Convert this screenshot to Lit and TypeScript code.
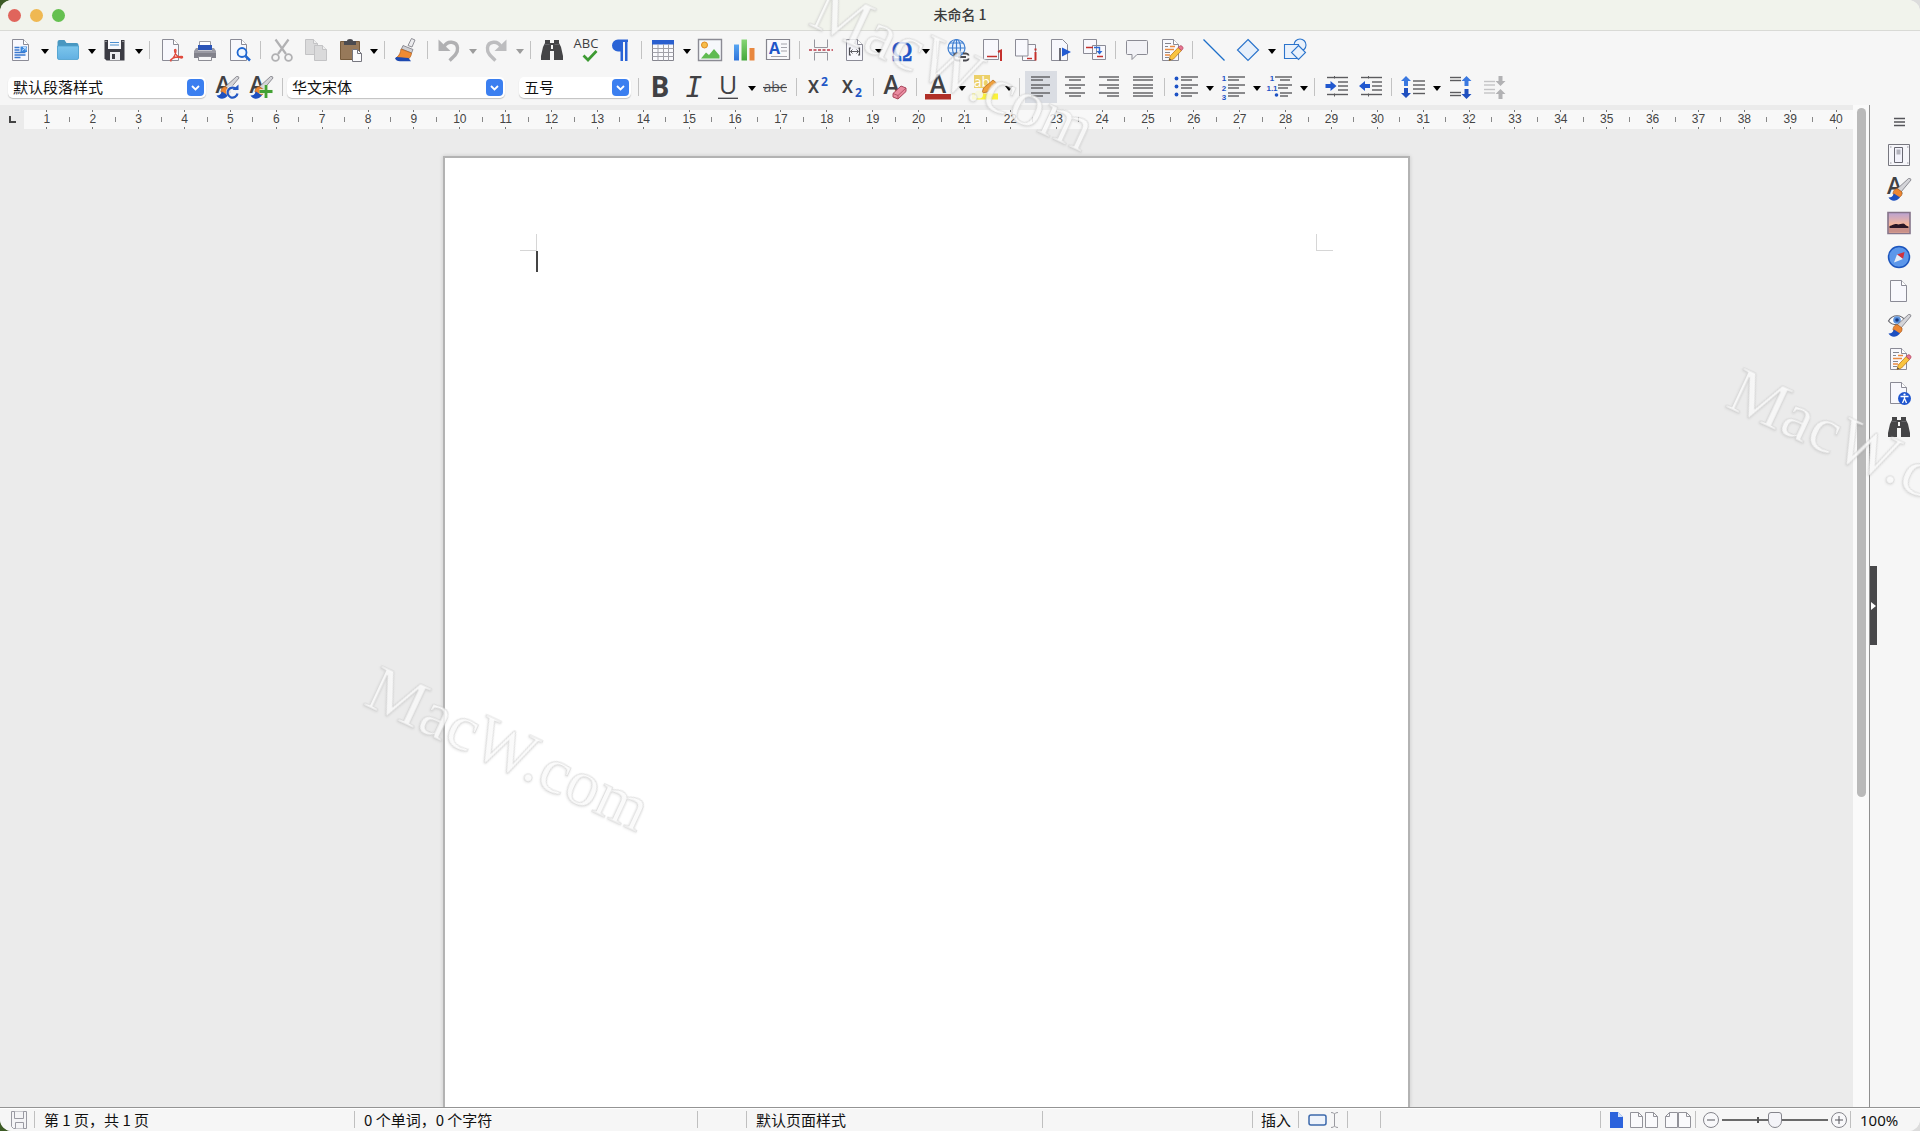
import { LitElement, html, svg, css, nothing, SVGTemplateResult, TemplateResult } from "lit";
import { customElement, state } from "lit/decorators.js";
import { classMap } from "lit/directives/class-map.js";

const page = svg`<path d="M3.5 1.5h11l5 5v16h-16z" fill="#f8f8fd" stroke="#8b8b96"/><path d="M14.5 1.5v5h5" fill="#fff" stroke="#8b8b96"/>`;

const brushTip = svg`
  <path d="M21.500 1.500q2.500-.5 2.500 1.500l-10 12-4-3z" fill="#d4d4d8" stroke="#77777f" stroke-width=".8"/>
  <path d="M6 17c0-4 3-6 5-5l4 3c.5 3-1 5-4 5.500z" fill="#ed8733" stroke="#a55a1e" stroke-width=".7"/>
  <path d="M1.500 20.500c3 0 4-1 5.500-4l6 4c-1.500 2-4.500 3.300-6 3.300-2.500 0-4.500-1.500-5.500-3.300z" fill="#1e50c0"/>`;

const pencil = svg`
  <path d="M10 22.500l1.200-4.500 8-8.500 3.300 3-8 8.500z" fill="#f9c440" stroke="#c07a18" stroke-width=".8"/>
  <path d="M19.200 9.500l1.600-1.600c1.500-.8 4 1.200 3 3l-1.400 1.600z" fill="#e87592" stroke="#a93d55" stroke-width=".7"/>
  <path d="M10 22.500l.6-2.200 1.600 1.400z" fill="#444"/>`;

const binoculars = svg`<path d="M5 2h5v3h4V2h5v3l2 4 2 9v4h-9v-9h-4v9H1v-4l2-9 2-4z" fill="#454547"/><path d="M11 7h2v4h-2z" fill="#f5f5f5"/><path d="M4.500 6.500h5M14.500 6.500h5" stroke="#6c6c70" stroke-width=".8"/>`;

const arrowUp = (x: number, y: number, fill: string) => svg`<path d="M${x} ${y}l5 5h-3v5h-4v-5h-3z" fill=${fill}/>`;
const arrowDown = (x: number, y: number, fill: string) => svg`<path d="M${x} ${y}l5-5h-3v-5h-4v5h-3z" fill=${fill}/>`;

const hLines = (rows: [number, number, number][], colour = "#5c5c5f") =>
  rows.map(([x1, x2, y]) => svg`<path d="M${x1} ${y}H${x2}" stroke=${colour} stroke-width="1.400"/>`);

const icons: Record<string, SVGTemplateResult> = {
  newDoc: svg`${page}<path d="M5.500 9.500h5M5.500 12h5M5.500 14.500h11M5.500 17h11M5.500 19.500h6" stroke="#3a78cf" stroke-width="1.300"/><path d="M11.500 8.500h6.500v5.500h-6.500z" fill="#3a86dc"/><path d="M13 12.500l4-3M14 9.500h3v3" stroke="#bfe0ff" fill="none"/>`,
  folder: svg`<path d="M1.500 20V4q0-2 2-2h5l2 3h10q2 0 2 2v13z" fill="#4897c0"/><path d="M1.500 8h21v12q0 1.500-1.500 1.500H3q-1.500 0-1.500-1.500z" fill="url(#g-folder)" stroke="#4b9fce" stroke-width=".8"/>`,
  save: svg`<path d="M1.500 2h20v20.500h-18l-2-2z" fill="#3b3b43"/><path d="M5 2h13v9H5z" fill="#f8f8fb"/><path d="M7 4.500h9M7 7h9" stroke="#4c8fd0" stroke-width="1.100"/><path d="M7 14h10v8H7z" fill="#ececf0"/><path d="M9 16h3v5H9z" fill="#3b3b43"/><path d="M2.500 3.500h1M19.500 3.500h1" stroke="#ddd"/>`,
  pdf: svg`${page}<path d="M11 22.500c4-2 6-7 6-10 0-1.500-1.500-1.500-1.500 0 0 3.500 4 7.500 7 7.500 1.500 0 1.500-1.500 0-1.500-3 0-8 1-10.500 3-1 1-.5 2 .5 1" fill="none" stroke="#e04a3d" stroke-width="1.300"/>`,
  print: svg`<path d="M6.500 3.500h11v8h-11z" fill="#fff" stroke="#9a9aa2"/><path d="M5 7h14v5H5z" fill="#2c55b8"/><path d="M3 10h2v2.500h14V10h2l2 3v6H1v-6z" fill="#9a9aa3"/><path d="M1 15h22v5H1z" fill="#82828b"/><path d="M5.500 18.500h13v4h-13z" fill="#f6f6f6" stroke="#8d8d95"/>`,
  preview: svg`${page}<circle cx="15" cy="14.500" r="4.500" fill="#eef6ff" fill-opacity=".9" stroke="#1f67d2" stroke-width="1.800"/><path d="M18.500 18l4.500 4.500" stroke="#1f67d2" stroke-width="2.500"/>`,
  cut: svg`<g fill="none" stroke="#b1b1b3"><path d="M5.500 1.500L16 16M18.500 1.500L8 16" stroke-width="2.200"/><circle cx="5.500" cy="19.500" r="3.400" stroke-width="1.800"/><circle cx="18.500" cy="19.500" r="3.400" stroke-width="1.800"/></g>`,
  copy: svg`<g fill="#dadadb" stroke="#c3c3c5"><path d="M1.500 1.500h8l4 4v11h-12z"/><path d="M10.500 7.500h8l4 4v11h-12z"/><path d="M9.500 1.500v4h4M18.500 7.500v4h4" fill="#eee"/></g>`,
  paste: svg`<path d="M2.500 3.500h19v18h-19z" fill="#97795a" stroke="#775b3c"/><path d="M6 3h3q0-2 3-2t3 2h3v4H6z" fill="#4b4b50"/><path d="M14.500 11.500h5l4 4v8h-9z" fill="#fbfbfd" stroke="#77777f"/><path d="M19.500 11.500v4h4" fill="none" stroke="#77777f"/>`,
  brush: svg`<path d="M17.500 0.500l3.500 1.500-3 7-4-1.500z" fill="#ececee" stroke="#85858c" stroke-width=".9"/><path d="M9 7.500l10 4-1.500 3.500-10-4z" fill="#d0d0d4" stroke="#85858c" stroke-width=".9"/><path d="M7 11l10.500 4c0 2-1 4-3 6l-12-1.500c3-2 4-5 4.500-8.500z" fill="#f08b32" stroke="#ad5d1d" stroke-width=".7"/><path d="M2.500 19L14.500 20l2.500 3.300H6q-4 0-5-3z" fill="#1d49b0"/>`,
  undo: svg`<path d="M7 9c3-7 13-6 13.500 1 .5 5-3 8-8 12.500" fill="none" stroke="#b0b0b2" stroke-width="3.400"/><path d="M1.500 1.500v11.500h12z" fill="#b0b0b2"/>`,
  redo: svg`<path d="M17 9c-3-7-13-6-13.500 1-.5 5 3 8 8 12.500" fill="none" stroke="#bdbdbf" stroke-width="3.400"/><path d="M22.500 1.500v11.500h-12z" fill="#bdbdbf"/>`,
  find: binoculars,
  spelling: svg`<text x="12" y="9.500" text-anchor="middle" class="abc" fill="#3f3f42">ABC</text><path d="M9.500 17.500l4.500 4.500 8.500-9" fill="none" stroke="#3d9a32" stroke-width="2.700"/>`,
  pilcrow: svg`<path d="M20 1.500H10a6 6 0 0 0 0 12h2.500V23H15V4h2v19h2.500V4H20z" fill="#2a63d6"/>`,
  table: svg`<path d="M1.500 2.500h21v20h-21z" fill="#fafafd" stroke="#85858e"/><path d="M1 2h22v4.500H1z" fill="#2a5fcf"/><path d="M1.500 10.500h21M1.500 14.500h21M1.500 18.500h21M7 6v16.500M12.500 6v16.500M17.500 6v16.500" stroke="#a2a2aa"/>`,
  image: svg`<path d="M.5 1.500h23v21H.5z" fill="#f6f8fb" stroke="#8b8b94" stroke-width="1.400"/><circle cx="6.500" cy="7" r="3" fill="#f7bd4a" stroke="#de8b22"/><path d="M3 20.500l5-6 3 2.500 5-6 5.500 6.500v3z" fill="#5fbb52"/>`,
  chart: svg`<path d="M2 6.500h5v16H2z" fill="url(#g-blue)"/><path d="M9.500 1.500H15v21H9.500z" fill="url(#g-green)"/><path d="M17.500 10h5v12.500h-5z" fill="#e8873f"/>`,
  textbox: svg`<path d="M.5 1.500h23v20H.5z" fill="#f9f9fc" stroke="#85858e" stroke-width="1.200"/><text x="8.500" y="16" text-anchor="middle" class="boxA" fill="#1f56c8">A</text><path d="M15 6h6M15 9.500h6M15 13h6M5 18.500h16" stroke="#a4a4ac"/>`,
  pageBreak: svg`<path d="M5.500 1.500v8h13v-8M5.500 22.500v-8h13v8" fill="none" stroke="#96969e"/><path d="M0 12h24" stroke="#bb3a48" stroke-width="1.500" stroke-dasharray="3 1.500"/>`,
  field: svg`${page}<path d="M8 10H6.500v7H8M15 10h1.500v7H15" fill="none" stroke="#4b4b50" stroke-width="1.200"/><path d="M7.500 13.500h8M9.500 11.500l-2 2 2 2M13.500 11.500l2 2-2 2" fill="none" stroke="#5f5f66"/>`,
  omega: svg`<text x="12" y="22.500" text-anchor="middle" class="omega" fill="#1f56c8" stroke="#1f56c8" stroke-width=".5">Ω</text>`,
  link: svg`<g fill="#e9f2fd" stroke="#3f7ed0" stroke-width="1.200"><circle cx="10.500" cy="10" r="8.500"/><path d="M10.500 1.500v17M2 10h17M4 5h13M4 15h13" fill="none"/><ellipse cx="10.500" cy="10" rx="4" ry="8.500" fill="none"/></g><path d="M14 15.500h-3q-3 0-3 3.500t3 3.500h3M17 15.500h3q2 0 2.800 2M22.800 20.500q-.8 2-2.800 2h-3M12 19h8" fill="none" stroke="#4a4a50" stroke-width="1.800"/>`,
  footnote: svg`<path d="M3.500 1.500h15v20h-15z" fill="#f8f8fd" stroke="#8b8b96"/><path d="M7 18.500h10" stroke="#c5302d" stroke-width="1.500"/><path d="M18 14l3-1.500V23" fill="none" stroke="#c5302d" stroke-width="2"/>`,
  endnote: svg`<path d="M8.500 6.500h13v16h-13z" fill="#f8f8fd" stroke="#8b8b96"/><path d="M1.500 1.500h12.500v16.500H1.500z" fill="#f8f8fd" stroke="#8b8b96"/><path d="M13 20.500h5" stroke="#c5302d" stroke-width="1.400"/><path d="M21.500 14v8.500M21.500 10.500v2" stroke="#c5302d" stroke-width="2"/>`,
  bookmark: svg`<path d="M3.500 1.500h11l5 5v16h-16z" fill="#f8f8fd" stroke="#8b8b96"/><path d="M12 10v13" stroke="#6e6e78" stroke-width="2"/><path d="M14 9.500l9 4.500-9 4.500z" fill="#235bd2"/>`,
  crossRef: svg`<path d="M1.500 1.500h13v14h-13zM10.500 7.500h13v14h-13z" fill="#f8f8fd" stroke="#8b8b96"/><path d="M4 9.500h7M15 18.500h6" stroke="#c5302d" stroke-width="1.400"/><path d="M12 9.500h5.500v4" fill="none" stroke="#2b6ad6" stroke-width="1.400"/><path d="M14.500 13h6l-3 3.500z" fill="#2b6ad6"/>`,
  comment: svg`<path d="M2.500 2.500h19q1 0 1 1v12q0 1-1 1H12l-5 5v-5H2.500q-1 0-1-1v-12q0-1 1-1z" fill="#f2f2f6" stroke="#8b8b94"/>`,
  track: svg`${page}<path d="M6 5.500h6M6 8.500h3M6 14.500h5M6 19.500h4" stroke="#85858e"/><path d="M11 8.500h5M6 11.500h9M6 17h5" stroke="#ea8a41" stroke-width="1.300"/>${pencil}`,
  line: svg`<path d="M1.500 1.500l21 21" stroke="#1c6fc9" stroke-width="1.300"/>`,
  diamond: svg`<path d="M12 1.500L22.500 12 12 22.500 1.500 12z" fill="#e6effa" stroke="#2b74cc" stroke-width="1.200"/>`,
  shapes: svg`<g fill="#e9f1fb" stroke="#2b74cc" stroke-width="1.100"><circle cx="17" cy="7" r="6"/><path d="M1.500 6.500h14v14h-14z"/><path d="M15.500 7.500l7 7-7 7-7-7z"/></g>`,
  updateStyle: svg`<text x="8" y="18" text-anchor="middle" class="styleA" fill="#3f4144">A</text>${brushTip}<circle cx="17.500" cy="17" r="6.500" fill="#f5f5f5" fill-opacity=".8"/><path d="M21.500 14.500a5 5 0 1 0 1 4" fill="none" stroke="#2459c4" stroke-width="2.200"/><path d="M17.500 15h6V9.500z" fill="#2459c4"/>`,
  addStyle: svg`<text x="8" y="18" text-anchor="middle" class="styleA" fill="#3f4144">A</text>${brushTip}<path d="M17 10v13M10.500 16.500h13" stroke="#eef6ea" stroke-width="4.500"/><path d="M17 10v13M10.500 16.500h13" stroke="#43a134" stroke-width="2.800"/>`,
  bold: svg`<text x="12" y="22" text-anchor="middle" class="glyph" fill="#414144">B</text>`,
  italic: svg`<text x="12" y="22" text-anchor="middle" class="slanted" fill="#414144">I</text>`,
  underline: svg`<text x="12" y="18.500" text-anchor="middle" class="glyphU" fill="#414144">U</text><path d="M2 23.300h20" stroke="#414144" stroke-width="1.300"/>`,
  strike: svg`<text x="12" y="16.500" text-anchor="middle" class="struck" fill="#55555a">abc</text><path d="M0 12.500h24" stroke="#414144" stroke-width="1.200"/>`,
  superscript: svg`<text x="7.500" y="18" text-anchor="middle" class="scriptX" fill="#414144">X</text><text x="18.500" y="10.500" text-anchor="middle" class="script" fill="#2257c6">2</text>`,
  subscript: svg`<text x="7.500" y="18" text-anchor="middle" class="scriptX" fill="#414144">X</text><text x="18.500" y="22" text-anchor="middle" class="script" fill="#2257c6">2</text>`,
  clear: svg`<text x="8.500" y="18.500" text-anchor="middle" class="plainA" fill="#414144">A</text><path d="M10 18.500l8-7.500 5 2v3.500l-8 7.500-5-2z" fill="#e98ba0" stroke="#a9465c"/><path d="M10 18.500l5 2 8-7.500M15 20.500V24" fill="none" stroke="#a9465c" stroke-width=".8"/>`,
  fontColour: svg`<text x="12" y="18" text-anchor="middle" class="plainA" fill="#414144">A</text><path d="M-1 19h26v5.500H-1z" fill="#b02f26"/>`,
  highlight: svg`<path d="M1 0h16v13H1z" fill="#ecd069"/><text x="9" y="11.500" text-anchor="middle" class="struck" fill="#fff">ab</text><path d="M-1 18.500h26v6H-1z" fill="#fbf23b"/><path d="M9 18l1.500-5L20 5l3.500 3-9 9z" fill="#f0a03c" stroke="#b86c1a" stroke-width=".8"/><circle cx="6" cy="19.500" r="4" fill="#f7f7dd"/>`,
  left: svg`${hLines([[2, 21, 2], [2, 14, 5], [2, 21, 10], [2, 14, 13], [2, 21, 18], [2, 14, 21]])}`,
  centre: svg`${hLines([[2, 22, 2], [6, 18, 5], [2, 22, 10], [6, 18, 13], [2, 22, 18], [6, 18, 21]])}`,
  right: svg`${hLines([[2, 22, 2], [10, 22, 5], [2, 22, 10], [10, 22, 13], [2, 22, 18], [10, 22, 21]])}`,
  justify: svg`${hLines([[2, 22, 2], [2, 22, 5], [2, 22, 10], [2, 22, 13], [2, 22, 18], [2, 22, 21]])}`,
  bullets: svg`${hLines([[7, 24, 2], [7, 18, 5], [7, 24, 10], [7, 18, 13], [7, 24, 18], [7, 18, 21]])}<g fill="#1d52c5"><circle cx="2.500" cy="3.500" r="1.900"/><circle cx="2.500" cy="11.500" r="1.900"/><circle cx="2.500" cy="19.500" r="1.900"/></g>`,
  numbers: svg`${hLines([[7, 24, 2], [7, 18, 5], [7, 24, 10], [7, 18, 13], [7, 24, 18], [7, 18, 21]])}<g fill="#1d52c5" class="num" text-anchor="middle"><text x="3" y="6">1</text><text x="3" y="15.500">2</text><text x="3" y="25">3</text></g>`,
  outline: svg`${hLines([[7, 24, 2], [12, 22, 5], [10, 24, 10], [10, 20, 13], [12, 24, 18], [12, 20, 21]])}<g fill="#1d52c5" class="num" text-anchor="middle"><text x="4" y="6">1</text><text x="4" y="15.500">1.1</text></g><circle cx="8.500" cy="20" r="1.800" fill="#1d52c5"/>`,
  indent: svg`${hLines([[3, 24, 2.5], [14, 24, 7], [14, 24, 11], [14, 24, 15], [3, 24, 19.5]])}<path d="M12.500 11l-6-5v3H1.500v4h5v3z" fill="#2158cf"/><path d="M10.500 1v2.500M10.500 18.500v3" stroke="#5c5c5f"/>`,
  outdent: svg`${hLines([[3, 24, 2.5], [14, 24, 7], [14, 24, 11], [14, 24, 15], [3, 24, 19.5]])}<path d="M1 11l6-5v3h5v4H7v3z" fill="#2158cf"/><path d="M10.500 1v2.500M10.500 18.500v3" stroke="#5c5c5f"/>`,
  lineSpacing: svg`${arrowUp(5, 1, "#3a78e0")}${arrowDown(5, 23, "#2050c0")}${hLines([[12, 24, 6], [12, 24, 10], [12, 24, 14], [12, 24, 18.5]])}`,
  incSpacing: svg`${hLines([[2, 13, 2.5], [2, 13, 5.5], [2, 13, 17.5], [2, 13, 20.5]])}${arrowUp(18.5, 1, "#3a78e0")}${arrowDown(18.5, 24, "#2050c0")}`,
  decSpacing: svg`${hLines([[2, 13, 6.5], [2, 13, 10], [2, 13, 14.5], [2, 13, 18]], "#c4c4c6")}${arrowDown(18.5, 11, "#b2b2b4")}${arrowUp(18.5, 14, "#b2b2b4")}`,
  menu: svg`<path d="M7 8.500h11M7 12h11M7 15.500h11" stroke="#55555a" stroke-width="1.300"/>`,
  properties: svg`<path d="M1.500 1.500h21v21h-21z" fill="#f6f6fa" stroke="#77777f"/><path d="M7.500 4.500h8v15h-8z" fill="#f2f2fb" stroke="#686872"/><path d="M9.500 6.500h4v5h-4z" fill="#b3b3bd"/><path d="M3 4h1.500M20 4h1.500M3 20h1.500M20 20h1.500" stroke="#9a9aa2"/>`,
  styles: svg`<text x="7.500" y="17" text-anchor="middle" class="styleA" fill="#3f4144">A</text>${brushTip}`,
  gallery: svg`<path d="M1 1.500h22v21H1z" fill="url(#g-sky)" stroke="#85748a" stroke-width="1.600"/><path d="M2.500 15c3-1 5-2.500 7-2s2 .5 4 0 3-1 4 0 2 2 4 2.500V17h-19z" fill="#2b1626"/><path d="M2 17h20v4.500H2z" fill="#c98f88"/>`,
  navigator: svg`<circle cx="12" cy="12" r="10.500" fill="#5c97ea" stroke="#1c55bd" stroke-width="1.500"/><path d="M17.500 7l-1.500 7-6-4.500z" fill="#d2323c"/><path d="M7 17.500l3-8 6 4.500z" fill="#e6edf7"/>`,
  pageDeck: page,
  inspector: svg`<path d="M1.500 8c4-7 13-7 17 0-4 5-13 5-17 0z" fill="#fff" stroke="#66666e" stroke-width="1.200"/><circle cx="10" cy="7" r="3.800" fill="#5b92dd"/><circle cx="10" cy="7" r="1.800" fill="#173a80"/>${brushTip}`,
  access: svg`${page}<circle cx="17.500" cy="17.500" r="6.500" fill="#1e55cf"/><circle cx="17.500" cy="13.500" r="1.100" fill="#fff"/><path d="M13.500 15.500h8M17.500 15.500v3M17.200 18l-1.700 4M17.800 18l1.700 4" stroke="#fff" stroke-width="1.300"/>`,
};

type Tool = { icon: string; label: string; menu?: boolean; off?: boolean; on?: boolean } | "sep";

const standardBar: Tool[] = [
  { icon: "newDoc", label: "新建", menu: true },
  { icon: "folder", label: "打开", menu: true },
  { icon: "save", label: "保存", menu: true },
  "sep",
  { icon: "pdf", label: "导出为 PDF" },
  { icon: "print", label: "打印" },
  { icon: "preview", label: "打印预览" },
  "sep",
  { icon: "cut", label: "剪切", off: true },
  { icon: "copy", label: "复制", off: true },
  { icon: "paste", label: "粘贴", menu: true },
  "sep",
  { icon: "brush", label: "克隆格式" },
  "sep",
  { icon: "undo", label: "撤消", menu: true, off: true },
  { icon: "redo", label: "重做", menu: true, off: true },
  "sep",
  { icon: "find", label: "查找和替换" },
  { icon: "spelling", label: "拼写检查" },
  { icon: "pilcrow", label: "格式标记" },
  "sep",
  { icon: "table", label: "插入表格", menu: true },
  { icon: "image", label: "插入图像" },
  { icon: "chart", label: "插入图表" },
  { icon: "textbox", label: "插入文本框" },
  "sep",
  { icon: "pageBreak", label: "插入分页符" },
  { icon: "field", label: "插入字段", menu: true },
  { icon: "omega", label: "特殊字符", menu: true },
  "sep",
  { icon: "link", label: "插入超链接" },
  { icon: "footnote", label: "插入脚注" },
  { icon: "endnote", label: "插入尾注" },
  { icon: "bookmark", label: "插入书签" },
  { icon: "crossRef", label: "插入交叉引用" },
  "sep",
  { icon: "comment", label: "插入批注" },
  { icon: "track", label: "显示修订" },
  "sep",
  { icon: "line", label: "插入线条" },
  { icon: "diamond", label: "基本形状", menu: true },
  { icon: "shapes", label: "显示绘图功能" },
];

const formatBar: Tool[] = [
  { icon: "bold", label: "粗体" },
  { icon: "italic", label: "斜体" },
  { icon: "underline", label: "下划线", menu: true },
  { icon: "strike", label: "删除线" },
  "sep",
  { icon: "superscript", label: "上标" },
  { icon: "subscript", label: "下标" },
  "sep",
  { icon: "clear", label: "清除格式" },
  "sep",
  { icon: "fontColour", label: "字体颜色", menu: true },
  { icon: "highlight", label: "突出显示", menu: true },
  "sep",
  { icon: "left", label: "左对齐", on: true },
  { icon: "centre", label: "居中" },
  { icon: "right", label: "右对齐" },
  { icon: "justify", label: "两端对齐" },
  "sep",
  { icon: "bullets", label: "项目符号", menu: true },
  { icon: "numbers", label: "编号", menu: true },
  { icon: "outline", label: "大纲格式", menu: true },
  "sep",
  { icon: "indent", label: "增加缩进" },
  { icon: "outdent", label: "减少缩进" },
  "sep",
  { icon: "lineSpacing", label: "行间距", menu: true },
  { icon: "incSpacing", label: "增加段落间距" },
  { icon: "decSpacing", label: "减少段落间距", off: true },
];

const decks: [string, string][] = [
  ["menu", "侧边栏设置"],
  ["properties", "属性"],
  ["styles", "样式"],
  ["gallery", "图库"],
  ["navigator", "导航"],
  ["pageDeck", "页面"],
  ["inspector", "样式检查器"],
  ["track", "管理修订"],
  ["access", "无障碍检查"],
  ["find", "查找"],
];

const rulerMarks = Array.from({ length: 40 }, (_, i) => i + 1);

@customElement("app-root")
export class AppRoot extends LitElement {
  @state() private zoom = 100;

  static styles = css`
    :host {
      display: block;
      height: 100vh;
      overflow: hidden;
      background: linear-gradient(90deg, #3c5a24, #dcdcdc 40%);
      font-family: "Noto Sans CJK SC", "Noto Sans", sans-serif;
      font-size: 15px;
      color: #111;
    }
    * { box-sizing: border-box; }
    button, select, input { font: inherit; color: inherit; margin: 0; padding: 0; border: 0; background: none; }
    .window {
      position: relative;
      display: flex;
      flex-direction: column;
      height: 100%;
      border-radius: 12px;
      overflow: hidden;
      background: #f6f6f6;
    }
    .titlebar {
      display: grid;
      grid-template-columns: 1fr auto 1fr;
      align-items: center;
      height: 31px;
      padding: 0 8px;
      background: #f1f3ec;
      border-bottom: 1px solid #d9dad6;
    }
    .lights { display: flex; gap: 9px; }
    .light { width: 13px; height: 13px; border-radius: 50%; }
    .close { background: #e0655c; }
    .minimise { background: #efb852; }
    .maximise { background: #65c050; }
    h1 { margin: 0; padding-bottom: 2px; font-size: 14px; line-height: 20px; font-weight: 500; color: #3c3c3c; }
    .bar { display: flex; align-items: center; height: 38px; padding-left: 4px; }
    .format { height: 36px; padding-left: 8px; }
    .tool { display: flex; justify-content: center; align-items: center; width: 34px; height: 32px; flex: none; }
    .tool.on { background: #dadde3; margin: 0 1px; width: 32px; }
    .more { display: flex; justify-content: center; width: 13px; height: 24px; flex: none; color: #000; }
    .more svg { width: 8px; height: 24px; }
    .off { color: #9c9c9c; }
    .icon { width: 24px; height: 24px; overflow: visible; display: block; }
    .sep { width: 9px; display: flex; justify-content: center; flex: none; }
    .sep::before { content: ""; width: 1px; height: 18px; background: #c2c2c2; }
    .combo {
      display: grid;
      align-items: center;
      height: 21px;
      flex: none;
      background: #fff;
      border-radius: 5px;
      box-shadow: 0 1px 1px rgba(0, 0, 0, 0.22);
    }
    .combo select {
      grid-area: 1 / 1;
      width: 100%;
      height: 21px;
      padding: 0 0 2px 5px;
      line-height: 19px;
      appearance: none;
      outline: none;
    }
    .combo .chevron {
      grid-area: 1 / 1;
      justify-self: end;
      width: 17px;
      height: 17px;
      margin-right: 2px;
      border-radius: 4px;
      background: #3b7ff0;
      pointer-events: none;
    }
    .para { width: 198px; margin-right: 4px; }
    .face { width: 218px; margin-right: 14px; }
    .size { width: 112px; margin-right: 3px; }
    .work { display: flex; flex: 1; min-height: 0; }
    .editor { flex: 1; min-width: 0; display: flex; flex-direction: column; background: #ebebeb; }
    .rulerRow { display: flex; height: 24px; padding-top: 5px; overflow: hidden; }
    .corner { width: 24px; flex: none; display: flex; justify-content: center; align-items: center; }
    .corner i { width: 7px; height: 7px; border: solid #444; border-width: 0 0 2px 2px; }
    .ruler {
      flex: 1;
      display: grid;
      grid-template-columns: repeat(40, 1fr);
      margin-right: -6px;
      background: #f8f8f8;
      font: 12px/18px "Liberation Sans", sans-serif;
      color: #444;
    }
    .mark {
      text-align: center;
      background:
        linear-gradient(#777, #777) top center / 1px 2px no-repeat,
        linear-gradient(#777, #777) bottom center / 1px 2px no-repeat,
        linear-gradient(#888, #888) right center / 1px 5px no-repeat;
    }
    .canvas { flex: 1; min-height: 0; display: flex; padding-top: 27px; overflow: hidden; }
    .sheet {
      width: 52.2%;
      margin: 0 auto;
      padding: 76px 75px 0;
      background: #fff;
      border: 2px solid #b3b3b3;
      border-bottom: 0;
      box-shadow: 0 0 4px rgba(0, 0, 0, 0.15);
    }
    .crops { display: flex; justify-content: space-between; }
    .crop { width: 17px; height: 17px; border: 0 solid #d6d6d6; border-bottom-width: 1px; }
    .crop.start { border-right-width: 1px; }
    .crop.end { border-left-width: 1px; }
    .caret { width: 2px; height: 21px; margin-left: 16px; background: #444; }
    .scroll { width: 16px; padding: 3px 3px 0 4px; background: #fafafa; flex: none; }
    .thumb { height: 69%; border-radius: 5px; background: #b9b9b9; }
    .sidebar {
      position: relative;
      width: 51px;
      flex: none;
      display: flex;
      flex-direction: column;
      align-items: center;
      padding: 1px 0 0 8px;
      border-left: 1px solid #8f8f8f;
      background: #f6f6f6;
    }
    .deck { display: flex; align-items: center; justify-content: center; width: 34px; height: 34px; flex: none; }
    .deck:first-child { height: 32px; }
    .fold {
      position: absolute;
      left: 0;
      top: calc(50% - 40px);
      width: 7px;
      height: 79px;
      display: flex;
      align-items: center;
      background: #48484a;
    }
    .fold svg { width: 7px; height: 8px; }
    .status {
      display: flex;
      align-items: center;
      height: 24px;
      border-top: 1px solid #949494;
      background: #f6f6f6;
      box-shadow: inset 0 1px #fff;
      font-size: 15px;
      line-height: 22px;
      white-space: nowrap;
    }
    .cell { display: flex; align-items: center; height: 17px; padding: 0 9px; border-right: 1px solid #bfbfbf; }
    .saved { width: 35px; padding: 0 0 0 10px; flex: none; }
    .pages { flex: 320 1 320px; }
    .words { flex: 343 1 343px; }
    .blank { flex: 49 1 49px; }
    .pageStyle { flex: 296 1 296px; }
    .locale { flex: 210 1 210px; }
    .insert { width: 46px; padding: 0 8px; flex: none; }
    .selection { width: 49px; flex: none; }
    .sign { width: 33px; flex: none; }
    .info { flex: 220 1 220px; }
    .views { width: 95px; gap: 7px; padding: 0 0 0 9px; flex: none; }
    .zoomer { width: 155px; gap: 3px; padding: 0 3px 0 7px; flex: none; }
    .zoomer button, .views button { display: flex; flex: none; }
    .status svg { display: block; overflow: visible; }
    .percent { width: 69px; padding-left: 9px; font-family: "Noto Sans", sans-serif; flex: none; }
    input[type="range"] { appearance: none; flex: 1; min-width: 0; height: 16px; background: linear-gradient(#555, #555) 34% center / 2px 6px no-repeat, linear-gradient(#6a6a6a, #6a6a6a) center / 100% 2px no-repeat; }
    input[type="range"]::-webkit-slider-thumb {
      appearance: none;
      width: 14px;
      height: 16px;
      border: 1px solid #85858c;
      border-radius: 3px 3px 7px 7px;
      background: #f4f4f8;
    }
    .marks { position: absolute; inset: 0; width: 100%; height: 100%; pointer-events: none; }
    .marks text {
      font: 66px "Liberation Serif", serif;
      fill: #fff;
      fill-opacity: 0.8;
      stroke: #c8c8c8;
      stroke-opacity: 0.5;
      stroke-width: 1px;
      filter: drop-shadow(0 1px 1px rgba(0, 0, 0, 0.12));
    }
    .defs { position: absolute; width: 0; height: 0; }
    .abc { font: 13px "Open Sans", sans-serif; }
    .boxA { font: 700 16px "Open Sans", sans-serif; }
    .omega { font: 29px "Liberation Serif", serif; }
    .styleA { font: 600 23px "Open Sans", sans-serif; }
    .glyph { font: 700 28px "Open Sans", sans-serif; }
    .slanted { font: italic 28px "DejaVu Sans Mono", monospace; }
    .glyphU { font: 25px "Open Sans", sans-serif; }
    .struck { font: 14px "Open Sans", sans-serif; }
    .scriptX { font: 500 18px "Roboto", sans-serif; }
    .script { font: 700 12px "Open Sans", sans-serif; }
    .plainA { font: 500 25px "Roboto", sans-serif; }
    .num { font: 700 8px "Liberation Sans", sans-serif; }
  `;

  private icon(name: string): TemplateResult {
    return html`<svg class="icon" viewBox="0 0 24 24" aria-hidden="true">${icons[name]}</svg>`;
  }

  private tool(t: Tool): TemplateResult {
    if (t === "sep") return html`<span class="sep"></span>`;
    return html`<button class=${classMap({ tool: true, on: !!t.on })} aria-label=${t.label} ?disabled=${!!t.off}>${this.icon(t.icon)}</button>${t.menu
      ? html`<button class=${classMap({ more: true, off: !!t.off })} aria-label=${t.label + "选项"} ?disabled=${!!t.off}>
          <svg viewBox="0 0 8 24"><path d="M0 11h8l-4 5z" fill="currentColor"/></svg>
        </button>`
      : nothing}`;
  }

  private combo(kind: string, label: string, value: string): TemplateResult {
    return html`<label class="combo ${kind}">
      <select aria-label=${label}><option>${value}</option></select>
      <svg class="chevron" viewBox="0 0 17 17"><path d="M5 7l3.500 3.500L12 7" fill="none" stroke="#fff" stroke-width="1.800"/></svg>
    </label>`;
  }

  render() {
    return html`
      <svg class="defs" aria-hidden="true">
        <defs>
          <linearGradient id="g-folder" x2="0" y2="1"><stop stop-color="#7cc6ec"/><stop offset="1" stop-color="#62b0e2"/></linearGradient>
          <linearGradient id="g-blue" x2="0" y2="1"><stop stop-color="#58a6f2"/><stop offset="1" stop-color="#2f74da"/></linearGradient>
          <linearGradient id="g-green" x2="0" y2="1"><stop stop-color="#86d574"/><stop offset="1" stop-color="#46a83c"/></linearGradient>
          <linearGradient id="g-sky" x2="0" y2="1"><stop stop-color="#b9a2d2"/><stop offset=".6" stop-color="#f8b79a"/></linearGradient>
        </defs>
      </svg>
      <div class="window">
        <header class="titlebar">
          <div class="lights">
            <button class="light close" aria-label="关闭"></button>
            <button class="light minimise" aria-label="最小化"></button>
            <button class="light maximise" aria-label="缩放"></button>
          </div>
          <h1>未命名 1</h1>
        </header>
        <nav class="bar" aria-label="标准">${standardBar.map((t) => this.tool(t))}</nav>
        <nav class="bar format" aria-label="格式">
          ${this.combo("para", "段落样式", "默认段落样式")}
          ${this.tool({ icon: "updateStyle", label: "更新样式" })}
          ${this.tool({ icon: "addStyle", label: "新建样式" })}
          ${this.tool("sep")}
          ${this.combo("face", "字体名称", "华文宋体")}
          ${this.combo("size", "字号", "五号")}
          ${this.tool("sep")}
          ${formatBar.map((t) => this.tool(t))}
        </nav>
        <div class="work">
          <main class="editor">
            <div class="rulerRow">
              <div class="corner"><i></i></div>
              <div class="ruler">${rulerMarks.map((n) => html`<span class="mark">${n}</span>`)}</div>
            </div>
            <div class="canvas">
              <article class="sheet">
                <div class="crops"><span class="crop start"></span><span class="crop end"></span></div>
                <div class="caret"></div>
              </article>
            </div>
          </main>
          <div class="scroll"><div class="thumb"></div></div>
          <aside class="sidebar">
            ${decks.map(([icon, label]) => html`<button class="deck" aria-label=${label}>${this.icon(icon)}</button>`)}
            <button class="fold" aria-label="折叠侧边栏"><svg viewBox="0 0 7 8"><path d="M1 0l5 4-5 4z" fill="#fff"/></svg></button>
          </aside>
        </div>
        <footer class="status">
          <div class="cell saved">
            <svg width="18" height="18" viewBox="0 0 18 18" fill="#f4f4f6" stroke="#9a9aa2"><path d="M1.500.5h15v17h-13l-2-2z"/><path d="M4.500.5v7h9v-7M5.500 17.500v-6h8v6"/></svg>
          </div>
          <div class="cell pages">第 1 页，共 1 页</div>
          <div class="cell words">0 个单词，0 个字符</div>
          <div class="cell blank"></div>
          <div class="cell pageStyle">默认页面样式</div>
          <div class="cell locale"></div>
          <div class="cell insert">插入</div>
          <div class="cell selection">
            <svg width="32" height="16" viewBox="0 0 32 16" fill="none"><rect x="1" y="3" width="17" height="10" rx="2" fill="#eef3fb" stroke="#3c69ac" stroke-width="1.500"/><path d="M23 .5q3 0 3.500 1.500.5-1.500 3.500-1.500M26.500 2v12M23 15.500q3 0 3.500-1.500.5 1.500 3.500 1.500" stroke="#9a9aa0"/></svg>
          </div>
          <div class="cell sign"></div>
          <div class="cell info"></div>
          <div class="cell views">
            <button aria-label="单页视图"><svg width="13" height="16" viewBox="0 0 13 16"><path d="M0 0h8l5 5v11H0z" fill="#2c63dc"/><path d="M8 0v5h5z" fill="#cfe0fa"/></svg></button>
            <button aria-label="多页视图"><svg width="28" height="16" viewBox="0 0 28 16" fill="#fafafc" stroke="#93939a"><path d="M.5.500h8l4 4v11H.500zM15.500.500h8l4 4v11h-12z"/><path d="M8.500.500v4h4M23.500.500v4h4" fill="none"/></svg></button>
            <button aria-label="书籍视图"><svg width="26" height="16" viewBox="0 0 26 16" fill="#fafafc" stroke="#93939a"><path d="M4.500.500h8v15H.500v-11zM13.500.500h8l4 4v11h-12z"/><path d="M4.500.500v4h-4M21.500.500v4h4" fill="none"/></svg></button>
          </div>
          <div class="cell zoomer">
            <button aria-label="缩小"><svg width="16" height="16" viewBox="0 0 16 16" fill="#f8f8fa" stroke="#85858c"><circle cx="8" cy="8" r="7.500"/><path d="M4 8h8" stroke="#55555a"/></svg></button>
            <input type="range" min="0" max="200" .value=${String(this.zoom)} aria-label="缩放比例"
              @input=${(e: Event) => (this.zoom = Number((e.target as HTMLInputElement).value))} />
            <button aria-label="放大"><svg width="16" height="16" viewBox="0 0 16 16" fill="#f8f8fa" stroke="#85858c"><circle cx="8" cy="8" r="7.500"/><path d="M4 8h8M8 4v8" stroke="#55555a"/></svg></button>
          </div>
          <div class="percent">${this.zoom}%</div>
        </footer>
        <svg class="marks">
          <text transform="translate(362 704) rotate(25)">MacW.com</text>
          <text transform="translate(1724 406) rotate(25)">MacW.com</text>
          <text transform="translate(807 24) rotate(25)">MacW.com</text>
        </svg>
      </div>
    `;
  }
}
